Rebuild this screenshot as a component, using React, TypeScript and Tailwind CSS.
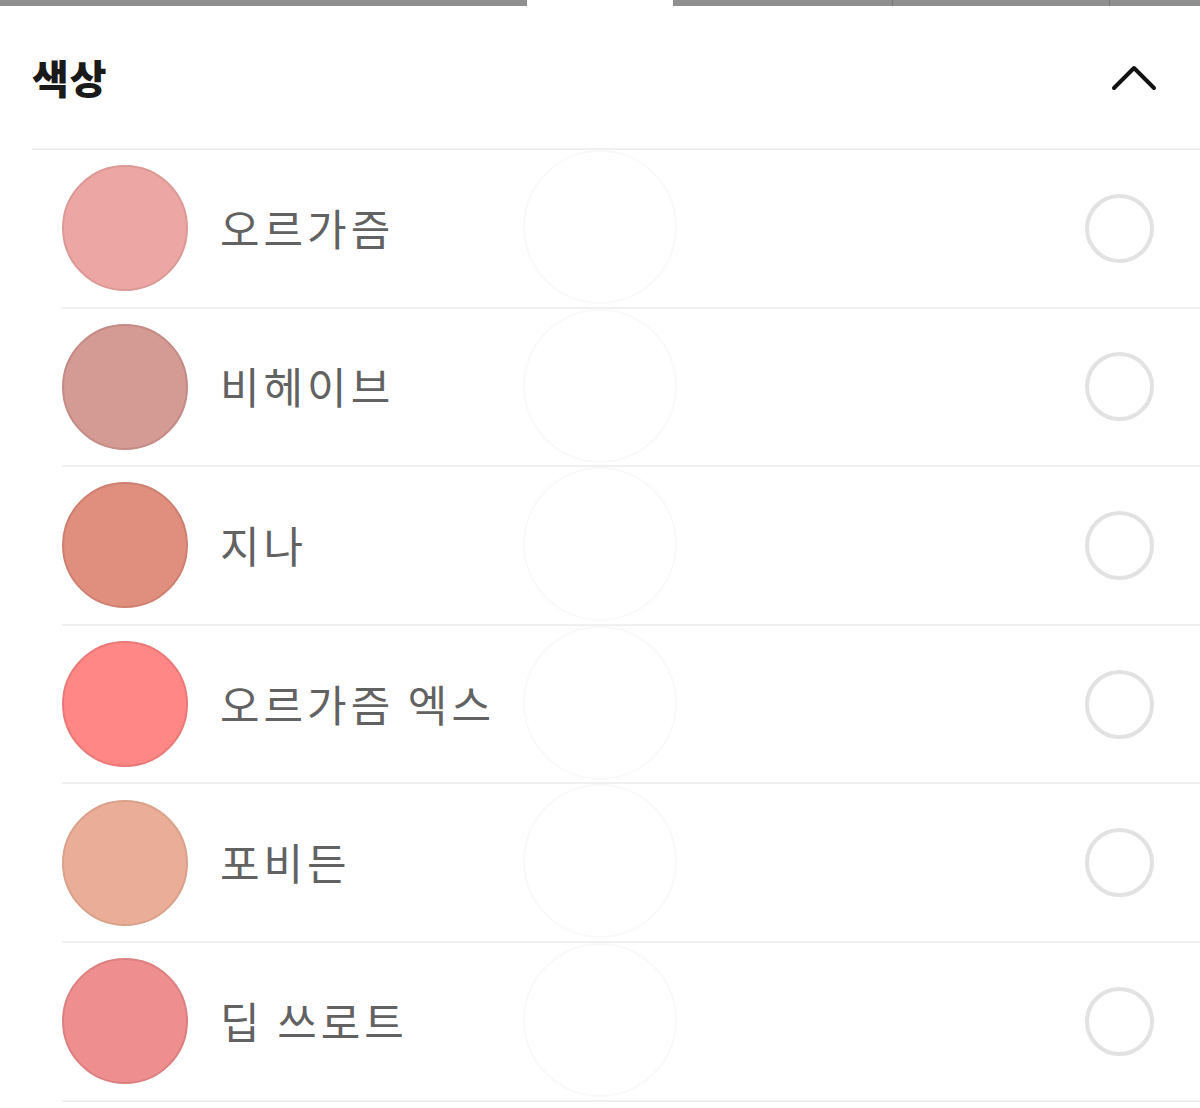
import React from "react";

const items = [
  { name: "오르가즘", color: "#eca6a3", border: "#dc9894" },
  { name: "비헤이브", color: "#d49a94", border: "#c48a85" },
  { name: "지나", color: "#e08f7f", border: "#cf7f70" },
  { name: "오르가즘 엑스", color: "#ff8886", border: "#ea7877" },
  { name: "포비든", color: "#eaae98", border: "#daa08a" },
  { name: "딥 쓰로트", color: "#ee8e8e", border: "#dc7f80" },
];

export default function App() {
  return (
    <div
      className="w-[1200px] h-[1108px] bg-white overflow-hidden"
      style={{ fontFamily: '"Noto Sans CJK KR", "Noto Sans", sans-serif' }}
    >
      <div className="flex h-[6px]">
        <div className="w-[527px] bg-[#8f8f8f]" />
        <div className="w-[146px] bg-white" />
        <div className="w-[220px] bg-[#8f8f8f] border-r border-[#777]" />
        <div className="w-[217px] bg-[#8f8f8f] border-r border-[#777]" />
        <div className="flex-1 bg-[#8f8f8f]" />
      </div>
      <div className="ml-[32px] h-[144px] flex items-center justify-between border-b-2 border-[#f0f0f0] pr-[43px]">
        <div className="text-[40px] font-black text-[#1a1a1a] leading-none tracking-[1px]">색상</div>
        <svg width="46" height="28" viewBox="0 0 46 28" className="mt-[2px]">
          <polyline points="3,24 23,4 43,24" fill="none" stroke="#111" strokeWidth="4" strokeLinecap="round" strokeLinejoin="round" />
        </svg>
      </div>
      <div className="ml-[62px]">
        {items.map((it) => (
          <div key={it.name} className="relative h-[158.6px] flex items-center border-b-2 border-[#f0f0f0]">
            <div
              className="w-[126px] h-[126px] rounded-full border-2"
              style={{ backgroundColor: it.color, borderColor: it.border }}
            />
            <div className="ml-[32px] text-[43px] tracking-[4px] text-[#626262] leading-none -mt-[2px]">{it.name}</div>
            <div className="absolute left-[461px] top-[0px] w-[154px] h-[154px] rounded-full border-2 border-[#f9f9f9]" />
            <div className="ml-auto mr-[46px] w-[69px] h-[69px] rounded-full border-[4px] border-[#e2e2e2]" />
          </div>
        ))}
      </div>
    </div>
  );
}
